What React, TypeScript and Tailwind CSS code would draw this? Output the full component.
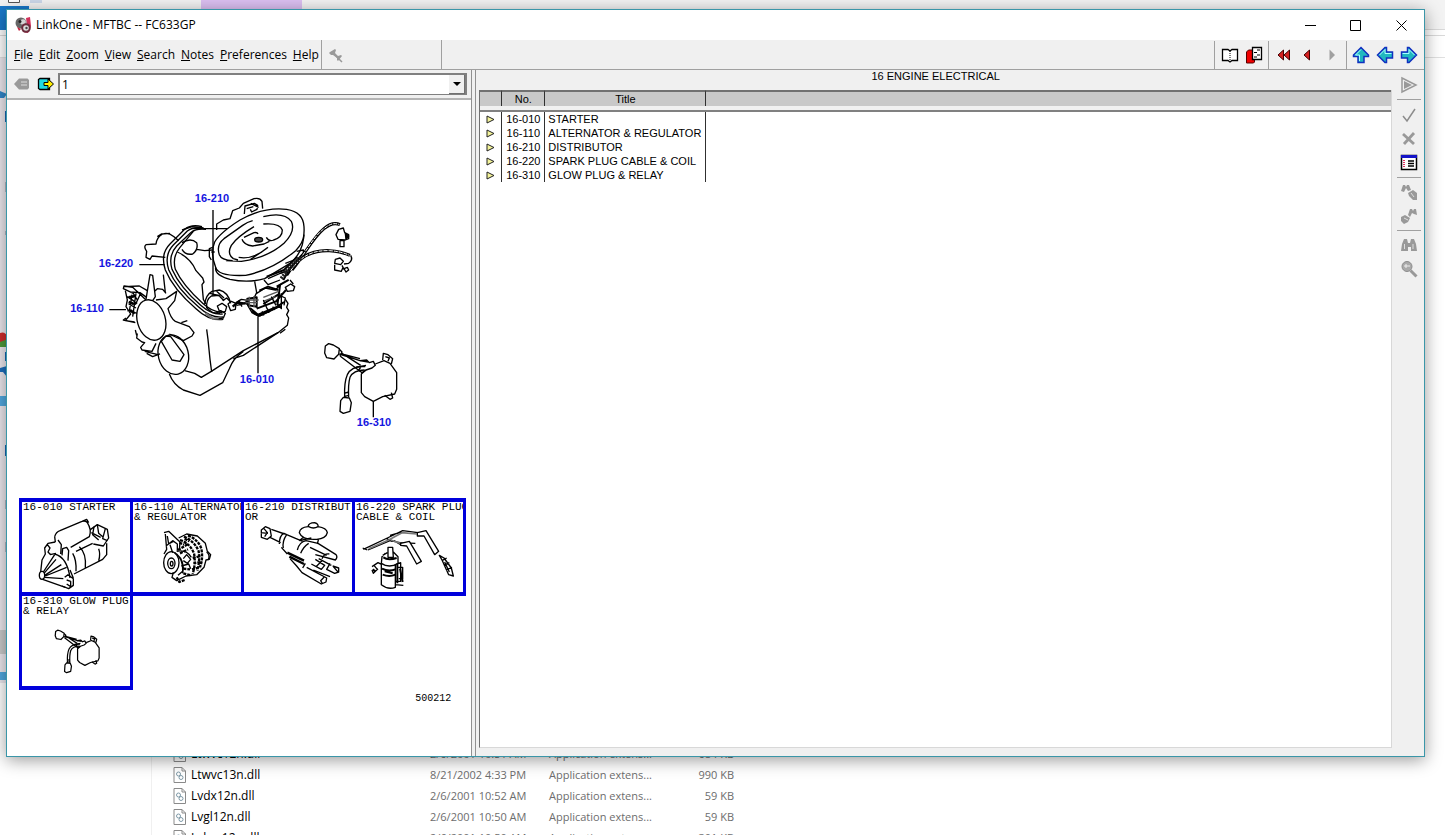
import { ReactNode } from "react";

type FileRow = { name: string; date: string; type: string; size: string };
type Part = { no: string; title: string };

const files: FileRow[] = [
  { name: "Ltwvc12n.dll", date: "2/6/2001 10:51 AM", type: "Application extens...", size: "684 KB" },
  { name: "Ltwvc13n.dll", date: "8/21/2002 4:33 PM", type: "Application extens...", size: "990 KB" },
  { name: "Lvdx12n.dll", date: "2/6/2001 10:52 AM", type: "Application extens...", size: "59 KB" },
  { name: "Lvgl12n.dll", date: "2/6/2001 10:50 AM", type: "Application extens...", size: "59 KB" },
  { name: "Lvkrn12n.dll", date: "2/6/2001 10:50 AM", type: "Application extens...", size: "301 KB" },
];

const parts: Part[] = [
  { no: "16-010", title: "STARTER" },
  { no: "16-110", title: "ALTERNATOR & REGULATOR" },
  { no: "16-210", title: "DISTRIBUTOR" },
  { no: "16-220", title: "SPARK PLUG CABLE & COIL" },
  { no: "16-310", title: "GLOW PLUG & RELAY" },
];

const menus = ["File", "Edit", "Zoom", "View", "Search", "Notes", "Preferences", "Help"];

const IconButton = ({ label, children }: { label: string; children: ReactNode }) => (
  <button aria-label={label} className="flex h-6 w-6 shrink-0 items-center justify-center">
    <svg width="18" height="18" viewBox="0 0 18 18" fill="none">
      {children}
    </svg>
  </button>
);

const VLine = () => <span className="h-7 w-px shrink-0 bg-[#a0a0a0]" />;
const HLine = () => <span className="h-px w-6 shrink-0 bg-[#a0a0a0]" />;

const DllIcon = () => (
  <svg width="13" height="16" viewBox="0 0 13 16" fill="none">
    <path d="M1 .5h8l3.500 3.500v11.500H1z" fill="#fff" stroke="#8a8a8a" />
    <path d="M9 .5v3.500h3.500" stroke="#8a8a8a" />
    <circle cx="5.500" cy="7" r="2" stroke="#7f9aa8" />
    <circle cx="8" cy="10.500" r="2" stroke="#7f9aa8" />
  </svg>
);

// glow plug relay, shared by the main drawing and its thumbnail
const Relay = () => (
  <g>
    <path d="M826 498l10-7 14 4 18 11-2 17-14 14-22-4-6-14z" />
    <path d="M868 508l8 8-6 12M868 522l62 20 24 4M870 528l60 46M876 520l56 36M884 524l46 12" />
    <path d="M930 542l20-2 8 8 12-4 6 12-10 8-18 6-12 8-10-8 6-8M918 562l30-6" />
    <path d="M946 560q-40-4-54 24-10 22-8 68M944 570q-34 0-44 22-6 20-4 60M882 640l14-4M882 650l14-4" />
    <path d="M872 662l8-10 18 2 6 14-4 26-20 6-10-6z" />
    <path d="M976 552l26-10 18 8 20 28v50l-6 14-36 8-28 14-26-14-10-12v-56l14-12" />
    <path d="M998 540l2-20 14 4 14 12-4 16M1006 530l12 4-4 10M1004 646l16 12 8-4-4-16" />
  </g>
);

const EngineDrawing = () => (
  <svg
    viewBox="7 100 465 398"
    className="block h-[398px] w-[465px]"
    role="img"
    aria-label="Engine electrical"
  >
    <g
      transform="translate(50 180) scale(.33333)"
      fill="none"
      stroke="#000"
      strokeWidth="4"
      strokeLinejoin="round"
    >
      {/* rear bracket and left housing */}
      <path d="M500 150v-18l20-12 20-4 8-24 20-8 12-14 32-14q18-4 24 8l2 22M583 102l2-24 28-8 10 6-2 12-16 8-4-8M590 86l20-6M602 70l24 12" />
      <path d="M346 232l-40-4-6 10-12-6 2-18q-10-14-2-20l30-2q2-20 20-30 16-6 34 8l14 12M322 170l12-8 26-2M396 150l30-10 34 4" />
      <path d="M430 146h112M396 188q26-16 44 0 6 20-12 34-22 4-32-14M440 208l24 4 22-2" />
      <path d="M382 216q40 18 56 56l20 22 4 12-6 8 4 44 8 14" />

      {/* air cleaner */}
      <path fill="#fff" d="M497 262q-4 24 43 36 54 12 104-2l76-46q46-36 42-110-2-44-52-52-70-8-140 32-60 38-76 66-14 34 3 76z" />
      <path d="M497 262q8 28 90 24 80-16 150-74 22-22 25-48M484 240l-6-10v-24l10-4M484 216h10" />
      <path d="M608 122q-16 4-30 14l-56 40q-24 18-14 48 6 16 40 18M640 110q62-16 84 14 14 30-22 66-50 44-128 54l-46-2M612 140q-50 30-68 56-14 26 6 40l14 4" />
      <path d="M640 132q50-4 57 18 0 22-26 30-14 6-22-8M582 172l30-14q10-2 12 4M576 178q6 18 32 20l34-6 16-8M566 232q44 8 88-30M602 238l50-34" />
      <ellipse cx="626" cy="179" rx="12" ry="7" fill="#444" />

      {/* ignition cables */}
      <path d="M456 140q-32-8-52 8l-44 44q-30 30-14 78 24 58 92 116 40 38 82 32" />
      <path d="M462 145q-32-6-50 8l-42 42q-28 30-14 74 24 56 90 112 36 34 74 30" />
      <path d="M468 148q-28-4-46 10l-42 40q-26 28-14 70 24 54 86 108 34 30 66 26" />
      <path d="M430 154l-40 48q-24 28-14 66 22 48 82 102 30 28 58 26" />
      <path strokeWidth="7" stroke="#777" d="M466 400l24 16 26-2" />

      {/* distributor */}
      <path d="M464 372q4-28 22-38l22-4q26 6 34 40M470 384q-2-26 14-36l22-2 16 16M480 340l30 8M500 334l22 20M470 384l18 14 22 2" />
      <path d="M502 378l14-8 14 10-4 14-16 4zM518 362l12-8 12 12M498 400l14-8 14 8-6 14-14 2M534 372l10-8 14 6-2 18-14 4zM558 368l16-10 24 4M560 376l26-6 12 6M566 360l10 20" />
      <path strokeWidth="7" d="M548 380l14-12 22 2 14-10" />

      {/* manifold and linkage */}
      <path d="M614 304l6 34-10 20M642 300l12 14 36-14M654 296l60-26M620 340l26-16 30 6 20-20" />
      <path strokeWidth="6" d="M592 356l28-4v28l-26-4zM620 386l58-22 30-34M600 384l24 20 58-24 20-14M606 394l20 14 56-26M650 290l52-20 40-40M700 300l20-36 40-44M680 320l36-20M628 332l26-12 30 10M690 316l-8 60M640 372l50-32" />
      <path stroke="#555" strokeWidth="4" d="M586 360h40M586 368h36M598 350v30M612 348v34M640 364l36-14M640 352l46-18" />
      <path d="M624 408l-18-10-12-20M630 408l62-30M636 394l6 12M652 386l6 12M668 380l6 10M682 372l12 14v-46M664 350l14 26M640 360l12 28" />
      <path d="M706 322l16-10 12 8-4 12-18 2zM720 300l10 12M740 214l20-4v18l-14 8M690 280l24-6 16-16M706 250l26-10M684 344l22 10-4 22" />

      {/* harness to the sensors */}
      <path strokeWidth="9" d="M726 270c40-48 60-94 96-124q26-22 48-12" />
      <path strokeWidth="3" stroke="#fff" strokeDasharray="12 3" d="M730 262c40-46 58-90 92-116q26-22 46-12" />
      <path strokeWidth="9" d="M710 286c30-54 74-76 128-74q36 2 62 14" />
      <path strokeWidth="3" stroke="#fff" strokeDasharray="12 3" d="M722 272c30-44 66-62 116-60q36 2 60 14" />
      <path strokeWidth="12" stroke="#222" d="M694 296l30-40 30-22" strokeDasharray="6 3" />
      <path fill="#fff" d="M866 148l14-4 4 14 12 6v12l-10 4-22-2-6-14zM870 182h12v18h-12z" />
      <path fill="#000" d="M886 160l10 8-8 10z" />
      <path d="M902 226q8 14-6 24l-14 2M856 238l14-4 10 10-8 10-18-4zM854 254v16l20 4 6-14M876 256l6 12M882 266l10-4 4 8-8 6z" />

      {/* block and oil pan */}
      <path d="M706 358l8 12-4 12 6 10-6 12 6 10-4 22-28 22-104 54-96 62-30 18-20-12-30-8" />
      <path d="M470 448l4 30 6 60 5 38M394 428l18-6M580 514q-30 20-42 52l-20 42-68 38-50-16q-30-16-42-48M550 536l30-10 104-68M690 460l16-12" />

      {/* fan and alternator */}
      <path d="M262 360l-12-20-30-14 2-8 26 4 40 38M226 332l6 28-4 20 14 22-16 20 28 4M222 320l46-2 24 14M240 336l30 2 20 14M232 350l30 20M236 372l22 12M232 392l30 8M246 344l-8 50M258 340l-10 70M270 344l-14 30M228 414l-8 6 36 8" />
      <path strokeWidth="8" d="M236 352l20-4M236 366l16 6M240 390l14 10" />
      <path d="M288 358l12-74 8 2 8 64-8 12M340 284l6 54M314 334l8-8 16 2 10 12M318 360l30-4 32-22-6 28-20 24q8 30 22 38l42 16 14 18-6 10-26 14-42-20" />
      <ellipse cx="304" cy="420" rx="42" ry="62" transform="rotate(-16 304 420)" fill="#fff" />
      <ellipse cx="370" cy="524" rx="45" ry="60" transform="rotate(-14 370 524)" />
      <path fill="#fff" d="M334 484l32 56 24 4 12-20-40-54-14-2z" />
      <path d="M262 460l-2 14 16 12 8 2-12 14 4 8 30 4 12-24M284 514l40 10M290 520l18 10 22-8M256 450l4 16" />

      <Relay />
      <path d="M489 90v258M268 254h76M178 389h50M624 410v170M970 664v48" />
    </g>
    <g className="fill-[#1414e0] font-['Liberation_Sans'] text-[11px] font-bold" textAnchor="middle">
      <text x="212" y="202">16-210</text>
      <text x="116" y="267">16-220</text>
      <text x="87" y="312">16-110</text>
      <text x="257" y="383">16-010</text>
      <text x="374" y="426">16-310</text>
    </g>
  </svg>
);

const Thumb = ({ lines, viewBox, children }: { lines: string[]; viewBox: string; children: ReactNode }) => (
  <button className="relative -mr-[3px] -mb-1 overflow-hidden border-x-[3px] border-y-4 border-[#0000dc] text-left">
    <svg
      viewBox={viewBox}
      className="absolute inset-0 h-full w-full"
      fill="none"
      stroke="#000"
      strokeWidth="4"
      strokeLinejoin="round"
    >
      {children}
    </svg>
    <span className="relative block h-full pl-px font-['Liberation_Mono',monospace] text-[11px] leading-[10px] whitespace-pre">
      {lines.join("\n")}
    </span>
  </button>
);

const Thumbnails = () => (
  <div className="ml-3 grid grid-cols-[repeat(4,111px)] auto-rows-[94px]">
    <Thumb lines={["16-010 STARTER"]} viewBox="36 36 324 270">
      <path d="M134 140q4-14 16-18l66-28q12-4 18 6M136 156l-2-16M216 94l14-6 6 10M232 98q14 22 6 42l-56 32M242 118l20-14 30 14 4 26-16 24-30-6" />
      <path d="M252 110l-4 24 18 16M262 104l4 26 14 12M286 116l-8 30 14 6M244 128l28 14M290 160v34l-12 14-86 44M266 176q6 16 0 36M248 160l-50 24M208 170q22 20 18 64M188 190q12 20 10 54" />
      <path d="M136 156l-22 4-10 14 2 18-10 18-4 36M112 164l8 10-6 12 8 8M144 150l10 14-2 28M156 196l2-20 12-4 6 10-2 30M134 192q38 10 46 72M120 194l18-4" />
      <path d="M100 246l34-52M102 250l36-42M104 256l50-32M106 258l64-26M104 262l56 4M98 268l68 24" />
      <ellipse cx="96" cy="256" rx="8" ry="12" />
      <path d="M164 262l10-8 16 12v20l-14 10-20-8M170 270l12 4v16l-12-8M180 240l10 24" />
    </Thumb>
    <Thumb lines={["16-110 ALTERNATOR", "& REGULATOR"]} viewBox="369 36 324 270">
      <path d="M462 128l14-4 34 32-2 24M466 132l4 46-8 14M472 138l4 24 14-8M468 168l20-16 14 10v20M480 164l8 24" />
      <ellipse cx="484" cy="218" rx="23" ry="33" />
      <ellipse cx="484" cy="220" rx="11" ry="16" />
      <ellipse cx="485" cy="221" rx="4" ry="7" />
      <path d="M494 188q26 18 24 56l-14 12M500 192q26 22 18 58M506 144l24-12 32 6 24 22 6 24 10 10-4 14-10 2-6 22-22 22-32 4-28 14-14-10 4-14" />
      <path strokeWidth="7" d="M510 150q30 10 42 40 6 30-4 62M522 140q32 14 44 44 4 30-4 58M534 136q32 14 40 40 6 30-4 56M508 158l14 6M524 146l14 8M504 180l30-18M510 190l24-12M548 204l24-6M550 220l24-4M546 238l24-6M500 262l8 14 16-6M520 250l24 6M520 236l20 2" strokeDasharray="9 3" />
      <path d="M500 184q30-6 44 18M520 206l10-12 12 14-10 12-12-8M590 186q12 10 4 24M514 228l22-6 6 14" />
    </Thumb>
    <Thumb lines={["16-210 DISTRIBUT-", "OR"]} viewBox="12 36 324 270">
      <path d="M64 120l12-10 14 6 4 22-12 10-18-6zM72 116l10 12-8 12M62 128l22 2M94 118l40 14M90 142l32 16M118 162q0-26 14-32l8 4q-14 20-10 40M140 134l48 20M124 172l18 20" />
      <path d="M178 128q2-16 26-18 2-12 20-12 12 4 10 12 26 4 28 18-4 18-32 20-44 2-52-20zM206 110q14 8 28 0M190 142l-12 10M236 146l-4 16M178 152l36-8M172 180q6-24 26-28l36 8 54 34q6 8-2 16l-60-16M210 172l50 24" />
      <path strokeWidth="7" d="M142 188l50 24M148 200l44 22" />
      <path d="M150 206l20 22 16 20 58 34 14-6 2-12-60-32M206 160q-16 10-24 30M246 206q6-16 22-14M214 222l30 16 10-12-28-18M228 230l18-18M252 262l-10 10 6 10M270 220l-10 18 24 12 12-4v-12l-18-6M280 230l14 16M236 206l38 20M220 240l50 20M196 220l-8 14" />
    </Thumb>
    <Thumb lines={["16-220 SPARK PLUG", "CABLE & COIL"]} viewBox="345 36 324 270">
      <path d="M370 178l72-34 46-22 46 6M384 180l66-28 30 6 46 2M368 174l14 6M440 146l16 8M450 136l36-10M462 152l20 12" />
      <path stroke="#777" strokeWidth="5" d="M386 176l60-26 40-22 44 4M452 150l28 10" />
      <path fill="#fff" d="M532 128l26-6 38 62-12 10-32-56h-20zM482 160l26-6 36 60-14 8-30-54-18-2z" />
      <path d="M598 196l8 14 20 44 14 4-6-24-22-30zM606 212l14-8M612 226l16-8M618 240l18-8M614 216l14 30" />
      <path d="M444 172h14l2 30h-16zM428 196l14-8M460 186l14 14v20q-26 16-50 0l2-20 10-10M424 218v66q20 16 42 8v-70M470 222l12-4v56h-14M474 232h14v34h-12M396 230l18-12 12 6M396 240l4 10 14-14M402 226l10 12M466 284l24 2" />
      <path strokeWidth="6" d="M426 236q20 10 40 2M428 254q20 8 38 0M434 244l24 6M472 220v60M480 236l8 40M430 202q14 10 40 2M398 238l8 6" />
    </Thumb>
    <Thumb lines={["16-310 GLOW PLUG", "& RELAY"]} viewBox="36 318 324 270">
      <g transform="translate(-367 121) scale(.61)" strokeWidth="6">
        <Relay />
      </g>
    </Thumb>
  </div>
);

const Explorer = () => (
  <div className="absolute inset-0 flex flex-col bg-white font-['Open_Sans',sans-serif] text-xs">
    <div className="flex h-[30px] shrink-0 border-b border-[#d9d9d9] bg-[#f3f3f3]">
      <div className="w-[201px]">
        <svg width="46" height="30" viewBox="0 0 46 30">
          <path d="M0 6h29v24H0z" fill="#1979ca" />
          <path d="M8.500 0v2.500h11V0" fill="#fff" stroke="#555" />
          <path d="M30 0h12v3H30z" fill="#cdd8ea" />
        </svg>
      </div>
      <div className="w-[101px] bg-[#dcc0f2]" />
    </div>
    <div className="h-7 shrink-0 border-b border-[#e0e0e0]">
      <div className="h-1.5 border-b border-[#d9d9d9]" />
    </div>
    <div className="flex min-h-0 flex-1">
      {/* navigation tree, mostly covered by the window */}
      <div className="w-[152px] shrink-0 border-r border-[#f0f0f0]">
        <svg width="8" height="640" viewBox="0 58 8 640">
          <path d="M0 58h8v625H0z" fill="#ece8ee" />
          <path d="M0 91l7 3-3 4H0z" fill="#2f86c9" />
          <path d="M5 111h2v11H5zM5 352h2v9H5zM5 445h2v11H5z" fill="#1766b5" />
          <path d="M5 182h2v10H5zM5 500h2v9H5zM5 542h2v10H5zM5 231h2v4H5z" fill="#b8b8c4" />
          <path d="M0 333q5-2 8 4v10H0z" fill="#cf2d2d" />
          <path d="M0 342l8-3v8H0z" fill="#4d9b3a" />
          <path d="M0 368l7-2v11l-4-5H0z" fill="#1d6fbd" />
          <path d="M0 396h8v10H0zM0 672h8v8H0z" fill="#51a8e0" />
          <path d="M0 630h8v24H0z" fill="#cacaca" />
        </svg>
      </div>
      <div className="flex flex-1 flex-col justify-end overflow-hidden">
        <div className="h-[92px] overflow-hidden">
          <table className="ml-[21px] table-fixed border-collapse text-[11px] text-[#6d6d6d]">
            <tbody>
              {files.map((file) => (
                <tr key={file.name} className="h-[21px] leading-4">
                  <td className="w-[257px] p-0 text-xs text-black">
                    <span className="flex items-center gap-[5px]">
                      <DllIcon />
                      {file.name}
                    </span>
                  </td>
                  <td className="w-[119px] p-0">{file.date}</td>
                  <td className="w-[119px] p-0">{file.type}</td>
                  <td className="w-[66px] p-0 text-right">{file.size}</td>
                </tr>
              ))}
            </tbody>
          </table>
        </div>
      </div>
    </div>
  </div>
);

const TitleBar = () => (
  <header className="flex h-[30px] shrink-0 items-center bg-white pl-2">
    <svg width="17" height="17" viewBox="0 0 17 17">
      <path d="M11 1l4-1 1 9-3 7-5-1 4-6z" fill="#d0305a" />
      <circle cx="6" cy="6" r="5.500" fill="#666" />
      <circle cx="8" cy="5" r="2.800" fill="#d4d4d4" />
      <circle cx="5" cy="4.500" r="1.500" fill="#222" />
      <circle cx="11" cy="11" r="4.800" fill="#6b2c3c" />
      <circle cx="11" cy="11" r="2.800" fill="#dcdcdc" />
      <circle cx="11.500" cy="11" r="1.200" fill="#444" />
      <path d="M2 10l4 2-2 2z" fill="#c41e3a" />
    </svg>
    <h1 className="ml-1 flex-1 text-xs">LinkOne - MFTBC -- FC633GP</h1>
    <button aria-label="Minimize" className="flex h-full w-[45px] items-center justify-center">
      <svg width="11" height="11" stroke="#000">
        <path d="M0 5.500h11" />
      </svg>
    </button>
    <button aria-label="Maximize" className="flex h-full w-[45px] items-center justify-center">
      <svg width="11" height="11" stroke="#000" fill="none">
        <path d="M.5.5h10v10H.5z" />
      </svg>
    </button>
    <button aria-label="Close" className="flex h-full w-[46px] items-center justify-center">
      <svg width="11" height="11" stroke="#000">
        <path d="M.5.5l10 10M10.500.5l-10 10" />
      </svg>
    </button>
  </header>
);

const MenuBar = () => (
  <nav className="flex h-[30px] shrink-0 items-center border-b border-[#a0a0a0] pr-[3px] pl-[7px]">
    <div className="flex gap-1.5 text-xs">
      {menus.map((menu) => (
        <button key={menu}>
          <span className="underline">{menu[0]}</span>
          {menu.slice(1)}
        </button>
      ))}
    </div>
    <div className="ml-0.5 flex h-full w-[121px] items-center border-x border-[#a0a0a0] pl-0.5">
      <IconButton label="Pin">
        <path d="M4 5l5-3 1 1-1 3 3 3 3-1 1 1-4 5-1-1v-2L7 8 5 8 3 6z" fill="#999" transform="translate(-1 1)" />
        <path d="M9 10l6 6" stroke="#999" strokeWidth="1.500" />
      </IconButton>
    </div>
    <div className="ml-auto flex items-center">
      <VLine />
      <span className="w-[3px]" />
      <IconButton label="Open book">
        <path d="M1.500 3.500h5.500l2 1.500 2-1.500h5.500v11H11l-2 1.500-2-1.500H1.500z" fill="#fff" stroke="#000" strokeWidth="1.300" />
        <path d="M9 5v10" stroke="#000" strokeDasharray="1 1" />
      </IconButton>
      <IconButton label="Book pages">
        <path d="M1.500 6l2-2h6v12l-1 1h-7z" fill="#f00000" stroke="#500" />
        <path d="M7.500 1.500h9v12h-9z" fill="#fff" stroke="#000" strokeWidth="1.300" />
        <path d="M12 4h3M9 6.500h3M12 9h3M9 11h3" stroke="#000" />
      </IconButton>
      <span className="w-0.5" />
      <VLine />
      <span className="w-[3px]" />
      <IconButton label="First">
        <path d="M8.500 4v10l-5.500-5zM14.500 4v10L9 9z" fill="#d42020" stroke="#400" />
      </IconButton>
      <IconButton label="Previous">
        <path d="M10.500 4v10L5 9z" fill="#d42020" stroke="#400" />
      </IconButton>
      <IconButton label="Next">
        <path d="M6.500 3.500v11L12 9z" fill="#a0a0a0" />
      </IconButton>
      <span className="w-0.5" />
      <VLine />
      <span className="w-0.5" />
      <IconButton label="Up">
        <path d="M9 1.500L16.500 9v1.500H12v6H6v-6H1.500V9z" fill="#20b8c0" stroke="#1030c0" strokeWidth="1.500" />
        <path d="M9 3.500L3.500 9h4v6" stroke="#a8ffff" />
      </IconButton>
      <IconButton label="Back">
        <path d="M1.500 9L9 1.500h1.500V6h6v6h-6v4.500H9z" fill="#20b8c0" stroke="#1030c0" strokeWidth="1.500" />
        <path d="M3.500 9L9 3.500v4h6.500" stroke="#a8ffff" />
      </IconButton>
      <IconButton label="Forward">
        <path d="M16.500 9L9 1.500H7.500V6h-6v6h6v4.500H9z" fill="#20b8c0" stroke="#1030c0" strokeWidth="1.500" />
        <path d="M2.500 7.500H9v-4L14.500 9" stroke="#a8ffff" />
      </IconButton>
    </div>
  </nav>
);

const PicturePane = () => (
  <section className="flex min-w-0 flex-[465] flex-col">
    <div className="flex h-[30px] shrink-0 items-center border-b-2 border-[#b4b4b4] pr-1 pl-[3px]">
      <IconButton label="Previous picture">
        <path d="M1 9l5-5.500h8.500L16 5v8l-1.500 1.500H6z" fill="#999" />
        <path d="M9 6v6M11 6v6M13 6v6" stroke="#ddd" strokeDasharray="2 1" />
      </IconButton>
      <IconButton label="Next picture">
        <path d="M1.500 4.500L3 3.500h9.500v11H3l-1.500-1z" fill="#20d8e0" stroke="#000" strokeWidth="1.300" />
        <path d="M7 7.500h4v-3.500l5.500 5-5.500 5v-3.500H7z" fill="#ffee00" stroke="#000" />
      </IconButton>
      <div className="relative flex-1">
        <select
          aria-label="Picture number"
          className="block h-[22px] w-full appearance-none border-t-2 border-r-2 border-b border-l-2 border-[#808080] bg-white pl-0.5 text-xs"
        >
          <option>1</option>
        </select>
        <span className="pointer-events-none absolute top-0.5 right-0.5 flex h-[19px] w-4 items-center justify-center border-r border-b border-[#707070] bg-[#f0f0f0]">
          <svg width="8" height="4">
            <path d="M0 0h8L4 4z" />
          </svg>
        </span>
      </div>
    </div>
    <div className="min-h-0 flex-1 overflow-hidden bg-white">
      <EngineDrawing />
      <Thumbnails />
      <p className="mt-2 pr-5 text-right font-['Liberation_Mono',monospace] text-[10px] leading-[10px]">
        500212
      </p>
    </div>
  </section>
);

const ListPane = () => (
  <section className="flex min-w-0 flex-[914] flex-col pr-0.5 font-['Liberation_Sans'] leading-[14px]">
    <h2 className="h-5 shrink-0 text-center text-[11px] leading-[13px]">16 ENGINE ELECTRICAL</h2>
    <div className="mb-2 min-h-0 flex-1 overflow-hidden border-r border-b border-l border-[#d8d8d8] border-l-[#707070] bg-white">
      <table className="w-full table-fixed border-separate border-spacing-0 text-[11px]">
        <thead>
          <tr className="h-4 bg-[#c8c8c8] leading-[13px]">
            <th className="w-[22px] border-t-2 border-r border-t-[#707070] border-r-[#303030] p-0">
              <span className="sr-only">Open</span>
            </th>
            <th className="w-[43px] border-t-2 border-r border-t-[#707070] border-r-[#303030] p-0 font-normal">No.</th>
            <th className="w-[161px] border-t-2 border-r border-t-[#707070] border-r-[#303030] p-0 font-normal">Title</th>
            <th className="border-t-2 border-[#707070] p-0" />
          </tr>
        </thead>
        <tbody>
          <tr aria-hidden="true">
            <td colSpan={4} className="h-[6px] border-b-2 border-[#808080] bg-[#f0f0f0] p-0" />
          </tr>
          {parts.map((part) => (
            <tr key={part.no} className="h-[14px]">
              <td className="border-r border-[#303030] p-0">
                <button aria-label={"Open " + part.title} className="mx-auto block">
                  <svg width="9" height="9" viewBox="0 0 9 9" className="block">
                    <path d="M1 1l7 3.500L1 8z" fill="#f4f49a" stroke="#222" />
                  </svg>
                </button>
              </td>
              <td className="border-r border-[#303030] p-0 text-center">{part.no}</td>
              <td className="border-r border-[#303030] p-0 pl-[3px] whitespace-nowrap">{part.title}</td>
              <td className="p-0" />
            </tr>
          ))}
        </tbody>
      </table>
    </div>
  </section>
);

const SideTools = () => (
  <aside className="flex w-[30px] shrink-0 flex-col items-center pt-[3px]">
    <IconButton label="Run">
      <path d="M2 2l14 7-14 7z" stroke="#999" strokeWidth="1.500" />
      <path d="M4 5l8 4-8 4z" fill="#999" />
    </IconButton>
    <span className="h-0.5" />
    <HLine />
    <span className="h-[3px]" />
    <IconButton label="Accept">
      <path d="M3 10l4 5 8-12" stroke="#8c8c8c" strokeWidth="1.500" />
    </IconButton>
    <IconButton label="Cancel">
      <path d="M3 4l11 10M14 3L4 14" stroke="#999" strokeWidth="2.800" />
    </IconButton>
    <IconButton label="Details">
      <path d="M1.500 1.500h15v14h-15z" fill="#fff" stroke="#000" strokeWidth="1.500" />
      <path d="M1 1h16v3H1z" fill="#1414c8" />
      <path d="M8 7h6M8 9.500h6M8 12h6" stroke="#000" strokeWidth="1.300" />
      <path d="M4 6v8" stroke="#e03060" strokeWidth="2" strokeDasharray="1 1" />
    </IconButton>
    <span className="h-0.5" />
    <HLine />
    <span className="h-0.5" />
    <IconButton label="Find next">
      <path d="M1 8l2-6h2l1 2 1-2h2l2 5-3 1-2-3-2 4zM8 10l5-3 4 3v7h-4l-4-4z" fill="#999" />
      <path d="M11 10l3 4" stroke="#ddd" />
    </IconButton>
    <IconButton label="Find in book">
      <path d="M8 8l2-6h2l1 2 1-2h2l1 6-3-1-2-1-2 4zM1 10l4-2 5 3-2 4-4 2-3-3z" fill="#999" />
      <path d="M4 11l4 2" stroke="#ddd" />
    </IconButton>
    <span className="h-0.5" />
    <HLine />
    <span className="h-0.5" />
    <IconButton label="Find">
      <path d="M1 15l1-7 2-5h3l1 4h2l1-4h3l2 5 1 7h-6v-4H8v4z" fill="#999" />
      <path d="M4.500 8v5M13 8v5" stroke="#ddd" />
    </IconButton>
    <IconButton label="Search notes">
      <circle cx="7" cy="6.500" r="5" fill="#aaa" stroke="#8c8c8c" />
      <path d="M4 6h6M6 4v4" stroke="#eee" />
      <path d="M10.500 10.500l6 6" stroke="#999" strokeWidth="3" />
    </IconButton>
  </aside>
);

const App = () => {
  return (
    <main className="relative h-screen overflow-hidden text-black">
      <Explorer />
      <div className="absolute top-[9px] right-5 bottom-[78px] left-1.5 flex flex-col border border-[#3a96a8] bg-[#f0f0f0] font-['Open_Sans',sans-serif] shadow-[0_3px_16px_rgba(0,0,0,0.4)]">
        <TitleBar />
        <MenuBar />
        <div className="flex min-h-0 flex-1">
          <PicturePane />
          <div className="w-2 shrink-0 border-l border-[#909090]">
            <div className="ml-[3px] h-full w-px bg-[#909090]" />
          </div>
          <ListPane />
          <SideTools />
        </div>
      </div>
    </main>
  );
};

export default App;
